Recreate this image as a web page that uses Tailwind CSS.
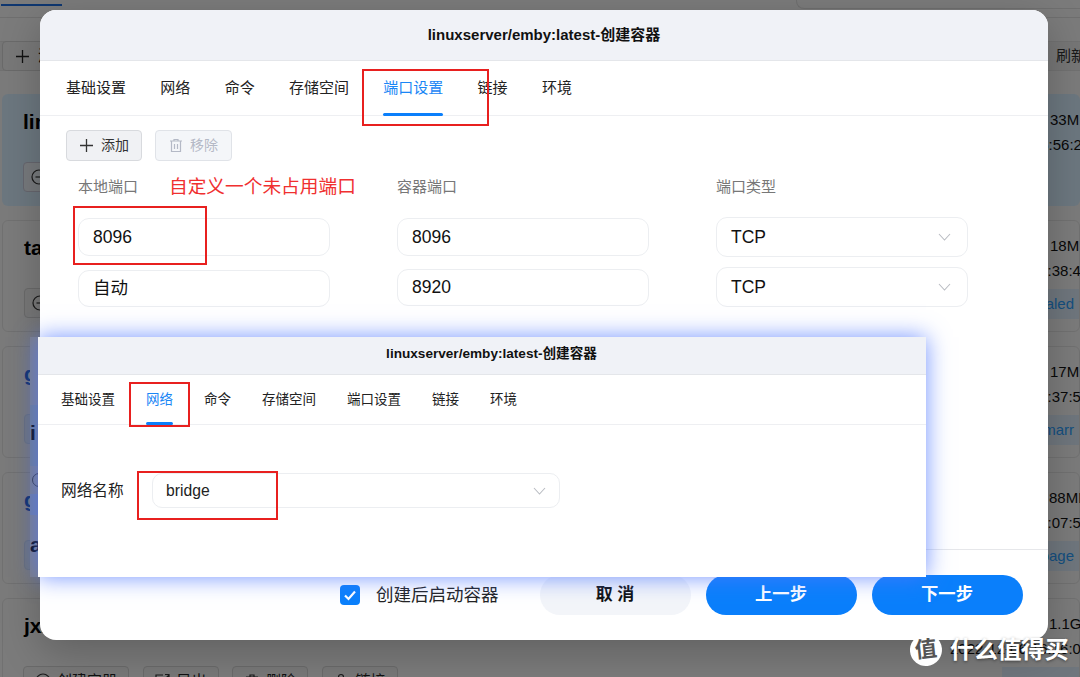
<!DOCTYPE html>
<html lang="en">
<head>
  <meta charset="UTF-8">
  <meta name="viewport" content="width=device-width, initial-scale=1.0">
  <title>linuxserver/emby:latest-创建容器</title>
  <script src="https://cdn.jsdelivr.net/npm/@tailwindcss/browser@4"></script>
</head>
<body class="relative w-[1080px] h-[677px] overflow-hidden bg-[#f6f6f6] text-black font-['Liberation_Sans','Noto_Sans_CJK_SC',sans-serif]">

  <!-- page behind the dialog -->
  <div class="flex flex-col">
    <div class="relative h-[18px] flex border-b border-[#dedede]">
      <div class="w-[61px] h-[2px] mt-[4px] ml-[1px] bg-[#1f6fe0]"></div>
      <div class="ml-auto w-[284px] h-[9px] rounded-bl-lg border-l border-b border-[#dedede]"></div>
    </div>
    <div class="mt-[23px] h-[30px] flex items-center justify-between bg-[#ededed] border-y border-[#e2e2e2]">
      <div class="ml-[2px] h-[30px] w-[80px] flex items-center gap-[8px] pl-[12px] rounded border border-[#d4d4d4] bg-[#f0f0f0]">
        <svg class="w-[15px] h-[15px]" viewBox="0 0 15 15" fill="none" stroke="#222" stroke-width="1.3"><path d="M7.5 1v13M1 7.500h13"/></svg>
        <span class="text-[15px]">添加</span>
      </div>
      <span class="text-[15px] text-[#333] pr-0 w-[24px] overflow-hidden whitespace-nowrap">刷新</span>
    </div>

    <div class="mt-[23px] flex flex-col gap-[14px] pl-[2px]">
      <div class="h-[112px] flex justify-between rounded-md bg-[#d9eeff]">
        <div class="pl-[21px] pt-[14px]">
          <div class="text-[21px] leading-[28px] font-bold">linux</div>
          <div class="mt-[26px] w-[60px] h-[30px] flex items-center pl-[7px] rounded border border-[#ccd] bg-[#eef4fa]">
            <svg class="w-[16px] h-[16px]" viewBox="0 0 16 16" fill="none" stroke="#333" stroke-width="1.2"><circle cx="8" cy="8" r="7"/><path d="M4.500 8h7"/></svg>
          </div>
        </div>
        <div class="w-[129px] shrink-0 pt-[13px] text-[15px] leading-[25px] whitespace-nowrap text-[#111]">
          <div class="pl-[99px]">33MB</div>
          <div>2022-12-06 16:56:23</div>
        </div>
      </div>

      <div class="h-[112px] flex justify-between rounded-md border border-[#e3e3e3]">
        <div class="pl-[21px] pt-[13px]">
          <div class="text-[21px] leading-[28px] font-bold">tailscale</div>
          <div class="mt-[26px] w-[60px] h-[30px] flex items-center pl-[7px] rounded border border-[#d4d4d4] bg-[#f0f0f0]">
            <svg class="w-[16px] h-[16px]" viewBox="0 0 16 16" fill="none" stroke="#333" stroke-width="1.2"><circle cx="8" cy="8" r="7"/><path d="M4.500 8h7"/></svg>
          </div>
        </div>
        <div class="w-[129px] shrink-0 pt-[12px] text-[15px] leading-[25px] whitespace-nowrap text-[#111]">
          <div class="pl-[100px]">18MB</div>
          <div>2022-12-06 16:38:45</div>
          <div class="mt-[6px] ml-auto w-[77px] h-[30px] leading-[30px] text-right pr-[5px] bg-[#deecfa] text-[#2a9fff]">sealed</div>
        </div>
      </div>

      <div class="h-[112px] flex justify-between rounded-md border border-[#e3e3e3]">
        <div class="pl-[21px] pt-[13px]">
          <div class="text-[21px] leading-[28px] font-bold text-[#1a5fd0]">g</div>
          <div class="mt-[26px] w-[60px] h-[30px] rounded border border-[#d4e2f4] bg-[#e4eefa]"></div>
        </div>
        <div class="w-[129px] shrink-0 pt-[12px] text-[15px] leading-[25px] whitespace-nowrap text-[#111]">
          <div class="pl-[100px]">17MB</div>
          <div>2022-12-06 16:37:54</div>
          <div class="mt-[6px] ml-auto w-[77px] h-[30px] leading-[30px] text-right pr-[5px] bg-[#deecfa] text-[#2a9fff]">marr</div>
        </div>
      </div>

      <div class="h-[112px] flex justify-between rounded-md border border-[#e3e3e3]">
        <div class="pl-[21px] pt-[13px]">
          <div class="text-[21px] leading-[28px] font-bold text-[#1a5fd0]">g</div>
          <div class="mt-[26px] w-[60px] h-[30px] rounded border border-[#d4e2f4] bg-[#e4eefa]"></div>
        </div>
        <div class="w-[129px] shrink-0 pt-[12px] text-[15px] leading-[25px] whitespace-nowrap text-[#111]">
          <div class="pl-[99px]">88MB</div>
          <div>2022-12-06 16:07:52</div>
          <div class="mt-[6px] ml-auto w-[77px] h-[30px] leading-[30px] text-right pr-[5px] bg-[#deecfa] text-[#2a9fff]">page</div>
        </div>
      </div>

      <div class="h-[112px] flex justify-between rounded-md border border-[#e3e3e3]">
        <div class="pl-[21px] pt-[13px]">
          <div class="text-[21px] leading-[28px] font-bold">jxxx</div>
          <div class="mt-[26px] -ml-[1px] flex gap-[13.500px] text-[15px] text-[#222]">
            <div class="w-[106px] h-[30px] flex items-center justify-center gap-[6px] rounded border border-[#d4d4d4] bg-[#f0f0f0]">
              <svg class="w-[16px] h-[16px]" viewBox="0 0 16 16" fill="none" stroke="#333" stroke-width="1.2"><circle cx="8" cy="8" r="7"/><path d="M4.500 8h7M8 4.500v7"/></svg>创建容器
            </div>
            <div class="w-[76px] h-[30px] flex items-center justify-center gap-[6px] rounded border border-[#d4d4d4] bg-[#f0f0f0]">
              <svg class="w-[16px] h-[16px]" viewBox="0 0 16 16" fill="none" stroke="#333" stroke-width="1.2"><path d="M9 2H2v12h12V8M9 8l6-6M11 1.500h4v4"/></svg>导出
            </div>
            <div class="w-[76px] h-[30px] flex items-center justify-center gap-[6px] rounded border border-[#d4d4d4] bg-[#f0f0f0]">
              <svg class="w-[16px] h-[16px]" viewBox="0 0 16 16" fill="none" stroke="#333" stroke-width="1.2"><path d="M2 4h12M6 4V2h4v2M3.500 4v10h9V4"/></svg>删除
            </div>
            <div class="w-[76px] h-[30px] flex items-center justify-center gap-[6px] rounded border border-[#d4d4d4] bg-[#f0f0f0]">
              <svg class="w-[16px] h-[16px]" viewBox="0 0 16 16" fill="none" stroke="#333" stroke-width="1.2"><circle cx="8" cy="4" r="2.500"/><path d="M3 14c0-3 2-5 5-5s5 2 5 5"/></svg>链接
            </div>
          </div>
        </div>
        <div class="w-[129px] shrink-0 pt-[12px] text-[15px] leading-[25px] whitespace-nowrap text-[#111]">
          <div class="pl-[99px]">1.1GB</div>
          <div>2022-12-06 16:16:04</div>
          <div class="mt-[6px] ml-auto w-[77px] h-[30px] bg-[#deecfa]"></div>
        </div>
      </div>
    </div>
  </div>

  <div class="absolute inset-0 bg-black/50"></div>

  <!-- main dialog -->
  <div class="absolute left-[40px] top-[10px] w-[1008px] h-[630px] flex flex-col rounded-[16px] overflow-hidden bg-white shadow-[0_12px_40px_rgba(0,0,0,0.22)]">
    <div class="h-[51px] shrink-0 flex items-center justify-center bg-[#f0f2f7] border-b border-[#e4e6ea] text-[15px] font-bold text-[#111]">linuxserver/emby:latest-创建容器</div>

    <div class="h-[55px] shrink-0 flex gap-[34.300px] pl-[26px] border-b border-[#eeeff2] text-[15px] text-[#222]">
      <div class="flex items-center">基础设置</div>
      <div class="flex items-center">网络</div>
      <div class="flex items-center">命令</div>
      <div class="flex items-center">存储空间</div>
      <div class="relative flex items-center text-[#1a86f5]">端口设置
        <div class="absolute left-0 right-0 bottom-[-1px] h-[3px] bg-[#0a7ffb] rounded-sm"></div>
      </div>
      <div class="flex items-center">链接</div>
      <div class="flex items-center">环境</div>
    </div>

    <div class="pl-[26px] pt-[14px]">
      <div class="flex gap-[13px] text-[14px]">
        <div class="w-[76px] h-[31px] flex items-center justify-center gap-[7px] rounded border border-[#d8dade] bg-[#f0f1f4] text-[#333]">
          <svg class="w-[15px] h-[15px]" viewBox="0 0 15 15" fill="none" stroke="#333" stroke-width="1.3"><path d="M7.500 1v13M1 7.500h13"/></svg>添加
        </div>
        <div class="w-[77px] h-[31px] flex items-center justify-center gap-[7px] rounded border border-[#e0e3e8] bg-[#f4f6f9] text-[#b4b9c6]">
          <svg class="w-[14px] h-[15px]" viewBox="0 0 14 15" fill="none" stroke="#b4b9c6" stroke-width="1.2"><path d="M1 3h12M5 3V1.500h4V3M2.500 3v10.500h9V3M5.500 6v5M8.500 6v5"/></svg>移除
        </div>
      </div>

      <div class="ml-[12px] mt-[15px] grid grid-cols-[252px_252px_252px] gap-x-[67px] text-[17.500px] text-[#111]">
        <div class="h-[22px] leading-[22px] text-[15px] text-[#777]">本地端口</div>
        <div class="h-[22px] leading-[22px] text-[15px] text-[#777]">容器端口</div>
        <div class="h-[22px] leading-[22px] text-[15px] text-[#777]">端口类型</div>

        <div class="mt-[20px] h-[38px] flex items-center pl-[14px] rounded-[11px] border border-[#eceef1]">8096</div>
        <div class="mt-[20px] h-[38px] flex items-center pl-[14px] rounded-[11px] border border-[#eceef1]">8096</div>
        <div class="mt-[19px] h-[40px] flex items-center justify-between pl-[14px] pr-[16px] rounded-[11px] border border-[#eceef1]">TCP
          <svg class="w-[13px] h-[8px]" viewBox="0 0 13 8" fill="none" stroke="#b9bcc2" stroke-width="1.1"><path d="M1 1l5.500 6L12 1"/></svg>
        </div>

        <div class="mt-[13px] h-[37px] flex items-center pl-[14px] rounded-[11px] border border-[#eceef1]">自动</div>
        <div class="mt-[12px] h-[37px] flex items-center pl-[14px] rounded-[11px] border border-[#eceef1]">8920</div>
        <div class="mt-[10px] h-[40px] flex items-center justify-between pl-[14px] pr-[16px] rounded-[11px] border border-[#eceef1]">TCP
          <svg class="w-[13px] h-[8px]" viewBox="0 0 13 8" fill="none" stroke="#b9bcc2" stroke-width="1.1"><path d="M1 1l5.500 6L12 1"/></svg>
        </div>
      </div>
    </div>

    <div class="mt-auto h-[91px] shrink-0 flex items-center border-t border-[#e6e7ea] pl-[300px]">
      <div class="w-[20px] h-[20px] flex items-center justify-center rounded-[4px] bg-[#0a7ffb]">
        <svg class="w-[14px] h-[14px]" viewBox="0 0 14 14" fill="none" stroke="#fff" stroke-width="2.200"><path d="M2 7.500l3.500 3.500L12 3.500"/></svg>
      </div>
      <span class="ml-[16px] text-[17.500px] text-[#222]">创建后启动容器</span>
      <div class="ml-[41px] w-[151px] h-[40px] flex items-center justify-center rounded-full bg-[#f3f5f9] text-[17px] font-bold text-[#111]">取 消</div>
      <div class="ml-[15px] w-[151px] h-[40px] flex items-center justify-center rounded-full bg-[#0a7ffb] text-[17.300px] font-bold text-white">上一步</div>
      <div class="ml-[15px] w-[151px] h-[40px] flex items-center justify-center rounded-full bg-[#0a7ffb] text-[17.300px] font-bold text-white">下一步</div>
    </div>
  </div>

  <!-- glow and strip left over from the pasted screenshot -->
  <div class="absolute left-[30px] top-[337px] w-[8px] h-[240px] bg-[#7b7d85]">
    <div class="absolute left-0 top-[68px] w-full h-[61px] bg-[#6e7b8c] text-[21px] leading-[56px] font-bold pl-0 overflow-hidden">i</div>
    <div class="absolute left-[2px] top-[136px] w-[14px] h-[14px] rounded-full border border-[#333]"></div>
    <div class="absolute left-0 top-[157px] w-full h-[21px] bg-[#6e7b9c]"></div>
    <div class="absolute left-0 top-[190px] w-full h-[46px] text-[21px] leading-[36px] font-bold overflow-hidden">a</div>
  </div>

  <!-- pasted second dialog -->
  <div class="absolute left-[38px] top-[337px] w-[888px] h-[240px] flex flex-col bg-white shadow-[0_0_22px_rgba(80,120,255,0.8)]">
    <div class="h-[38px] shrink-0 flex items-center justify-center pl-[19px] pb-[2px] bg-[#f0f2f7] border-b border-[#e4e6ea] text-[13.600px] font-bold text-[#111]">linuxserver/emby:latest-创建容器</div>
    <div class="h-[50px] shrink-0 flex gap-[31px] pl-[23px] border-b border-[#eeeff2] text-[13.500px] text-[#222]">
      <div class="flex items-center pt-[2px]">基础设置</div>
      <div class="relative flex items-center pt-[2px] text-[#1a86f5]">网络
        <div class="absolute left-0 right-0 bottom-[-1px] h-[3px] bg-[#0a7ffb] rounded-sm"></div>
      </div>
      <div class="flex items-center pt-[2px]">命令</div>
      <div class="flex items-center pt-[2px]">存储空间</div>
      <div class="flex items-center pt-[2px]">端口设置</div>
      <div class="flex items-center pt-[2px]">链接</div>
      <div class="flex items-center pt-[2px]">环境</div>
    </div>
    <div class="pt-[48px] pl-[23px] flex items-center">
      <span class="w-[91px] shrink-0 text-[15.700px] text-[#222]">网络名称</span>
      <div class="w-[408px] h-[35px] flex items-center justify-between pl-[13px] pr-[13px] pt-[1px] rounded-[10px] border border-[#eceef1] text-[15.700px] text-[#222]">bridge
        <svg class="w-[13px] h-[8px]" viewBox="0 0 13 8" fill="none" stroke="#b9bcc2" stroke-width="1.1"><path d="M1 1l5.500 6L12 1"/></svg>
      </div>
    </div>
  </div>

  <!-- red annotations -->
  <div class="absolute left-[362px] top-[69px] w-[127px] h-[57px] border-2 border-[#e8201f]"></div>
  <div class="absolute left-[73px] top-[206px] w-[134px] h-[59px] border-2 border-[#e8201f]"></div>
  <div class="absolute left-[169px] top-[175px] text-[18.700px] leading-[24px] text-[#f03030]">自定义一个未占用端口</div>
  <div class="absolute left-[129px] top-[382px] w-[61px] h-[45px] border-2 border-[#e8201f]"></div>
  <div class="absolute left-[137px] top-[471px] w-[141px] h-[49px] border-2 border-[#e8201f]"></div>

  <!-- watermark -->
  <div class="absolute left-[910px] top-[634px] flex items-center gap-[8px]">
    <div class="w-[32px] h-[32px] flex items-center justify-center rounded-full bg-white text-[22px] leading-none font-bold text-[#555] -rotate-6">值</div>
    <span class="text-[24px] leading-[32px] font-bold tracking-[-0.300px] text-white [text-shadow:0_1px_3px_rgba(0,0,0,0.45)]">什么值得买</span>
  </div>
</body>
</html>
